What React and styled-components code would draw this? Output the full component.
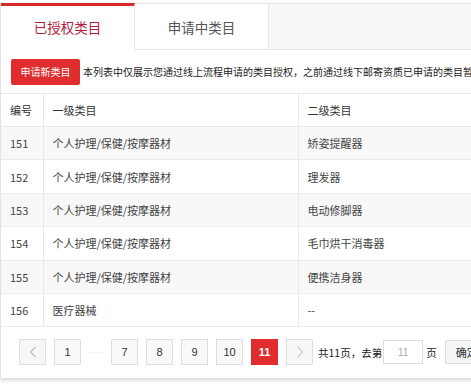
import React from 'react';
import styled, { createGlobalStyle } from 'styled-components';

const GlobalStyle = createGlobalStyle`
  body {
    margin: 0;
    background: #fff;
    font-family: "Noto Sans CJK SC", "Liberation Sans", sans-serif;
    color: #333;
  }
`;

const rows = [
  { id: 151, first: '个人护理/保健/按摩器材', second: '矫姿提醒器' },
  { id: 152, first: '个人护理/保健/按摩器材', second: '理发器' },
  { id: 153, first: '个人护理/保健/按摩器材', second: '电动修脚器' },
  { id: 154, first: '个人护理/保健/按摩器材', second: '毛巾烘干消毒器' },
  { id: 155, first: '个人护理/保健/按摩器材', second: '便携洁身器' },
  { id: 156, first: '医疗器械', second: '--' },
];

export default function App() {
  return (
    <Page>
      <GlobalStyle />
      <Panel>
        <TabBar>
          <Tab active>已授权类目</Tab>
          <Tab>申请中类目</Tab>
        </TabBar>
        <Toolbar>
          <ApplyButton>申请新类目</ApplyButton>
          <Notice>本列表中仅展示您通过线上流程申请的类目授权，之前通过线下邮寄资质已申请的类目暂不展示</Notice>
        </Toolbar>
        <Table>
          <colgroup>
            <col style={{ width: 42 }} />
            <col style={{ width: 255 }} />
            <col />
          </colgroup>
          <thead>
            <tr>
              <Th>编号</Th>
              <Th>一级类目</Th>
              <Th>二级类目</Th>
            </tr>
          </thead>
          <tbody>
            {rows.map((row, i) => (
              <Tr key={row.id} striped={i % 2 === 0}>
                <Td>{row.id}</Td>
                <Td>{row.first}</Td>
                <Td>{row.second}</Td>
              </Tr>
            ))}
          </tbody>
        </Table>
        <Pager>
          <PageButton muted>
            <svg width="8" height="12" viewBox="0 0 8 12">
              <path d="M6.5 1 L1.5 6 L6.5 11" fill="none" stroke="#bbb" strokeWidth="1.1" />
            </svg>
          </PageButton>
          <PageButton>1</PageButton>
          <Dots>· · ·</Dots>
          <PageButton>7</PageButton>
          <PageButton>8</PageButton>
          <PageButton>9</PageButton>
          <PageButton>10</PageButton>
          <PageButton current>11</PageButton>
          <PageButton muted>
            <svg width="8" height="12" viewBox="0 0 8 12">
              <path d="M1.5 1 L6.5 6 L1.5 11" fill="none" stroke="#ccc" strokeWidth="1.1" />
            </svg>
          </PageButton>
          <GotoText>共11页，去第</GotoText>
          <PageInput defaultValue="11" />
          <PageUnit>页</PageUnit>
          <ConfirmButton>确定</ConfirmButton>
        </Pager>
      </Panel>
    </Page>
  );
}

const Page = styled.div`
  width: 471px;
  height: 391px;
  overflow: hidden;
  padding-top: 3px;
  box-sizing: border-box;
  background: #fff;
`;

const Panel = styled.div`
  width: 620px;
  background: #fff;
  box-shadow: 0 2px 5px rgba(0, 0, 0, 0.18);
  border-left: 1px solid #e2e2e2;
`;

const TabBar = styled.div`
  display: flex;
  height: 45px;
  background: #f7f7f7;
  border-top: 1px solid #ececec;
  border-bottom: 1px solid #e6e6e6;
`;

const Tab = styled.div`
  width: 134px;
  box-sizing: border-box;
  display: flex;
  align-items: center;
  justify-content: center;
  font-size: 13.5px;
  color: ${p => (p.active ? '#b3203a' : '#555')};
  background: #fff;
  border-right: 1px solid #e8e8e8;
  margin-top: ${p => (p.active ? '-1px' : '0')};
  border-top: ${p => (p.active ? '3px solid #d9292b' : '0')};
  margin-bottom: ${p => (p.active ? '-1px' : '0')};
  padding-bottom: ${p => (p.active ? '2px' : '0')};
`;

const Toolbar = styled.div`
  display: flex;
  align-items: center;
  gap: 3px;
  height: 43px;
  padding: 0 10px;
  border-bottom: 1px solid #e8e8e8;
  white-space: nowrap;
`;

const ApplyButton = styled.button`
  width: 69px;
  height: 26px;
  padding: 0;
  border: 0;
  border-radius: 2px;
  background: #e02d2d;
  color: #fff;
  font-family: inherit;
  font-size: 10px;
`;

const Notice = styled.span`
  font-size: 10px;
  color: #222;
`;

const Table = styled.table`
  width: 100%;
  border-collapse: collapse;
  table-layout: fixed;
  font-size: 11px;
`;

const Th = styled.th`
  height: 32px;
  padding: 0 0 0 9px;
  text-align: left;
  font-weight: normal;
  color: #333;
  white-space: nowrap;
  border-bottom: 1px solid #e8e8e8;
  border-right: 1px solid #e8e8e8;
`;

const Tr = styled.tr`
  background: ${p => (p.striped ? '#f8f8f8' : '#fff')};
`;

const Td = styled.td`
  height: 32.4px;
  padding: 0 0 0 9px;
  color: #444;
  border-bottom: 1px solid #ebebeb;
  border-right: 1px solid #e8e8e8;
  white-space: nowrap;
`;

const Pager = styled.div`
  display: flex;
  align-items: center;
  gap: 8px;
  padding: 12px 18px 13px;
  white-space: nowrap;
`;

const PageButton = styled.div`
  width: 27px;
  height: 26px;
  box-sizing: border-box;
  display: flex;
  align-items: center;
  justify-content: center;
  font-family: "Liberation Sans", sans-serif;
  font-size: 11px;
  font-weight: ${p => (p.current ? 'bold' : 'normal')};
  color: ${p => (p.current ? '#fff' : '#333')};
  background: ${p => (p.current ? '#e02d2d' : p.muted ? '#f7f7f7' : '#f9f9f9')};
  border: 1px solid ${p => (p.current ? '#e02d2d' : '#dedede')};
`;

const Dots = styled.span`
  width: 14px;
  text-align: center;
  font-family: "Liberation Sans", sans-serif;
  font-size: 7px;
  color: #bbb;
`;

const GotoText = styled.span`
  font-family: "Noto Sans CJK SC", sans-serif;
  font-size: 10.5px;
  color: #222;
  margin-left: -3px;
  margin-right: -7px;
`;

const PageUnit = styled(GotoText)`
  margin-left: -5px;
  margin-right: 0;
`;

const PageInput = styled.input`
  width: 40px;
  height: 24px;
  box-sizing: border-box;
  border: 1px solid #ddd;
  text-align: center;
  font-family: "Liberation Sans", sans-serif;
  font-size: 10px;
  color: #aaa;
  outline: none;
  margin: 0;
  padding: 0;
`;

const ConfirmButton = styled.button`
  height: 24px;
  padding: 0 10px;
  margin-left: 0;
  border: 1px solid #ddd;
  border-radius: 2px;
  background: #f5f5f5;
  font-family: "Noto Sans CJK SC", sans-serif;
  font-size: 11px;
  color: #333;
`;
